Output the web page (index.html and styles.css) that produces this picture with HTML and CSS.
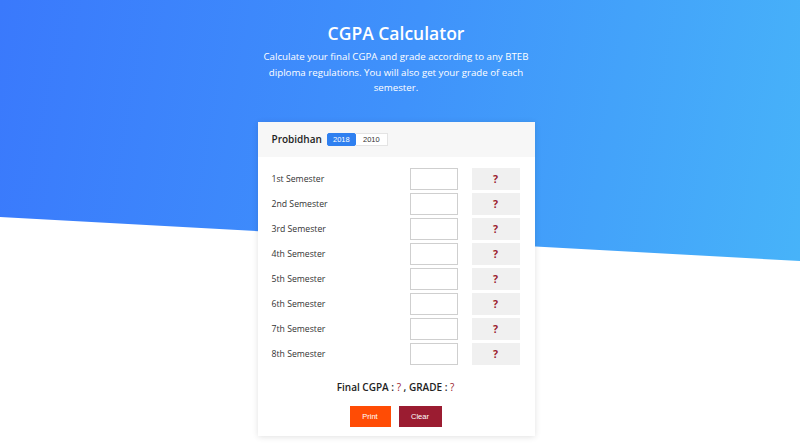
FILE: index.html
```html
<!DOCTYPE html>
<html>
<head>
<meta charset="utf-8">
<link rel="stylesheet" href="styles.css">
</head>
<body>
<div class="page">
  <div class="hero-bg"></div>
  <header class="hero">
    <h1 class="title">CGPA Calculator</h1>
    <p class="subtitle">Calculate your final CGPA and grade according to any BTEB diploma regulations. You will also get your grade of each semester.</p>
  </header>
  <section class="card">
    <div class="card-head">
      <span class="probidhan">Probidhan</span>
      <div class="toggle">
        <span class="opt active">2018</span>
        <span class="opt">2010</span>
      </div>
    </div>
    <div class="card-body">
      <div class="row"><span class="label">1st Semester</span><input class="gpa" type="text"><span class="grade">?</span></div>
      <div class="row"><span class="label">2nd Semester</span><input class="gpa" type="text"><span class="grade">?</span></div>
      <div class="row"><span class="label">3rd Semester</span><input class="gpa" type="text"><span class="grade">?</span></div>
      <div class="row"><span class="label">4th Semester</span><input class="gpa" type="text"><span class="grade">?</span></div>
      <div class="row"><span class="label">5th Semester</span><input class="gpa" type="text"><span class="grade">?</span></div>
      <div class="row"><span class="label">6th Semester</span><input class="gpa" type="text"><span class="grade">?</span></div>
      <div class="row"><span class="label">7th Semester</span><input class="gpa" type="text"><span class="grade">?</span></div>
      <div class="row"><span class="label">8th Semester</span><input class="gpa" type="text"><span class="grade">?</span></div>
      <p class="final">Final CGPA : <span class="q">?</span> , GRADE : <span class="q">?</span></p>
      <div class="actions">
        <button class="btn print">Print</button>
        <button class="btn clear">Clear</button>
      </div>
    </div>
  </section>
</div>
</body>
</html>
```

FILE: styles.css
```css
* { box-sizing: border-box; }
html, body { margin: 0; padding: 0; background: #fff; }
body { font-family: "Open Sans", "DejaVu Sans", sans-serif; overflow: hidden; }

.page {
  position: relative;
  width: 792px;
  height: 448px;
  display: flex;
  flex-direction: column;
  align-items: center;
}

.hero-bg {
  position: absolute;
  left: 0; top: 0;
  width: 800px;
  height: 262px;
  background: linear-gradient(100deg, #3a79fc 0%, #3f92fb 50%, #47b3f9 100%);
  clip-path: polygon(0 0, 100% 0, 100% 261px, 0 217px);
  z-index: 0;
}

.hero {
  position: relative;
  z-index: 1;
  text-align: center;
  color: #fff;
  width: 280px;
  padding-top: 21px;
}

.title {
  margin: 0;
  font-size: 17.5px;
  font-weight: 600;
  line-height: 24px;
}

.subtitle {
  margin: 4px 0 0;
  font-size: 9.7px;
  line-height: 15.5px;
  font-weight: 400;
}

.card {
  position: relative;
  z-index: 1;
  margin-top: 26px;
  width: 277px;
  background: #fff;
  box-shadow: 0 1px 6px rgba(0,0,0,0.12);
}

.card-head {
  height: 35px;
  background: #f7f7f7;
  display: flex;
  align-items: center;
  padding: 0 14px;
  gap: 5px;
}

.probidhan {
  font-size: 10px;
  font-weight: 600;
  color: #222;
}

.toggle {
  display: flex;
  height: 13px;
  font-family: "Liberation Sans", Arial, sans-serif;
  font-size: 7.5px;
}

.opt {
  display: flex;
  align-items: center;
  justify-content: center;
  width: 32px;
  background: #fff;
  border: 1px solid #e4e4e4;
  border-left: none;
  color: #333;
}

.opt.active {
  width: 29px;
  background: #2f80f0;
  border: 1px solid #2f80f0;
  color: #fff;
  border-radius: 2px;
}

.card-body {
  padding: 11px 15px 9px 14px;
  display: flex;
  flex-direction: column;
}

.row {
  display: flex;
  align-items: center;
  height: 22px;
  margin-bottom: 3px;
}

.label {
  flex: 1;
  font-size: 8.7px;
  color: #333;
}

.gpa {
  width: 48px;
  height: 22px;
  border: 1px solid #cfcfcf;
  margin: 0 14px 0 0;
  padding: 0;
  background: #fff;
}

.grade {
  width: 48px;
  height: 22px;
  background: #f0f0f0;
  display: flex;
  align-items: center;
  justify-content: center;
  color: #9a1b2e;
  font-weight: 700;
  font-size: 10.5px;
}

.final {
  margin: 12px 0 0;
  text-align: center;
  font-size: 10px;
  line-height: 14px;
  font-weight: 600;
  color: #222;
}

.final .q { color: #9a1b2e; font-weight: 400; }

.actions {
  display: flex;
  justify-content: center;
  gap: 8px;
  margin-top: 12px;
}

.btn {
  height: 21px;
  border: none;
  color: #fff;
  font-family: "Liberation Sans", Arial, sans-serif;
  font-size: 7.5px;
  padding: 0;
}

.btn.print { width: 41px; background: #ff4c05; }
.btn.clear { width: 43px; background: #9b1c31; }
```
